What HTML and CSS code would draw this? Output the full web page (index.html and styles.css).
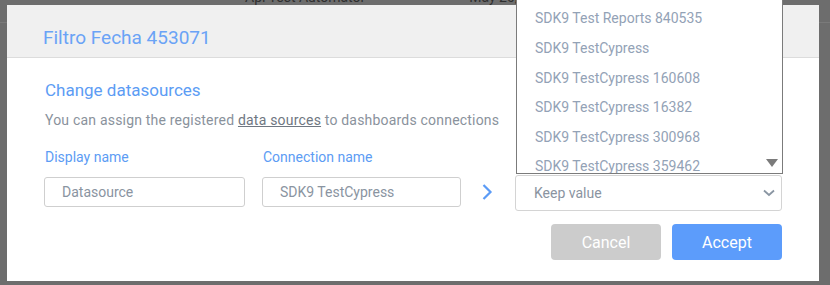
FILE: index.html
```html
<!DOCTYPE html>
<html lang="en">
<head>
  <meta charset="UTF-8">
  <title>Filtro Fecha 453071 - Change datasources</title>
  <link rel="stylesheet" href="styles.css">
</head>
<body>

  <!-- page behind the overlay -->
  <div class="behind">
    <span class="behind-name">Api Test Automator</span>
    <span class="behind-date">May 20,</span>
  </div>

  <div class="modal">
    <div class="modal-header">
      <h2 class="modal-title">Filtro Fecha 453071</h2>
    </div>

    <div class="modal-body">
      <h3 class="section-title">Change datasources</h3>
      <p class="section-text">You can assign the registered <a href="#">data sources</a> to dashboards connections</p>

      <div class="field-row">
        <div class="field field-display">
          <label class="field-label">Display name</label>
          <div class="input">Datasource</div>
        </div>
        <div class="field field-connection">
          <label class="field-label">Connection name</label>
          <div class="input">SDK9 TestCypress</div>
        </div>
        <div class="arrow">
          <svg width="12" height="18" viewBox="0 0 12 18">
            <path d="M2.5 2 L9.5 9 L2.5 16" fill="none" stroke="#5b9bf6" stroke-width="2.2"/>
          </svg>
        </div>
        <div class="field field-select">
          <div class="select">
            <span>Keep value</span>
            <svg width="12" height="8" viewBox="0 0 12 8">
              <path d="M1 1.5 L6 6 L11 1.5" fill="none" stroke="#8a96a3" stroke-width="1.8"/>
            </svg>
          </div>
          <div class="options">
            <div class="options-inner">
              <div class="option">SDK9 Test Reports 840535</div>
              <div class="option">SDK9 TestCypress</div>
              <div class="option">SDK9 TestCypress 160608</div>
              <div class="option">SDK9 TestCypress 16382</div>
              <div class="option">SDK9 TestCypress 300968</div>
              <div class="option">SDK9 TestCypress 359462</div>
            </div>
            <span class="scroll-down"></span>
          </div>
        </div>
      </div>

      <div class="actions">
        <button class="btn btn-cancel">Cancel</button>
        <button class="btn btn-accept">Accept</button>
      </div>
    </div>
  </div>

</body>
</html>
```

FILE: styles.css
```css
body {
  margin: 0;
  width: 830px;
  height: 285px;
  overflow: hidden;
  background: #6d6d6d;
  font-family: Roboto, "Liberation Sans", sans-serif;
  position: relative;
}
.behind {
  display: flex;
  margin-top: -11px;
  height: 33px;
  border-bottom: 1px solid #7a7a7a;
  font-size: 14px;
  color: #2f2f2f;
}
.behind-name {
  margin-left: 245px;
}
.behind-date {
  margin-left: 104px;
}

.modal {
  position: absolute;
  left: 7px;
  top: 5px;
  width: 812px;
  height: 276px;
  background: white;
}
.modal-header {
  height: 53px;
  background: #f0f0f0;
  border-bottom: 1px solid #dcdcdc;
  display: flex;
  align-items: center;
  padding-left: 36px;
  box-sizing: border-box;
}
.modal-title {
  margin: 12px 0 0 0;
  font-size: 19px;
  font-weight: normal;
  color: #6aa3f6;
}
.modal-body {
  padding: 22px 37px 0 37px;
}
.section-title {
  margin: 0 0 0 1px;
  font-size: 17px;
  font-weight: normal;
  color: #5c9cf4;
}
.section-text {
  margin: 12px 0 0 1px;
  font-size: 14px;
  letter-spacing: 0.2px;
  color: #8a929c;
}
.section-text a {
  color: #6f7782;
  text-decoration: underline;
}

.field-row {
  display: flex;
  align-items: flex-end;
  margin-top: 21px;
}
.field-label {
  display: block;
  margin: 0 0 12px 1px;
  font-size: 14px;
  color: #5c9cf4;
}
.input {
  height: 30px;
  box-sizing: border-box;
  border: 1px solid #cfcfcf;
  border-radius: 3px;
  padding: 0 17px;
  display: flex;
  align-items: center;
  font-size: 14px;
  color: #8a94a1;
}
.field-display {
  width: 201px;
}
.field-connection {
  width: 199px;
  margin-left: 17px;
}
.arrow {
  width: 54px;
  height: 30px;
  display: flex;
  align-items: center;
  padding-left: 20px;
  box-sizing: border-box;
}
.field-select {
  width: 267px;
  position: relative;
  margin-bottom: -4px;
}
.select {
  height: 36px;
  box-sizing: border-box;
  border: 1px solid #d4d4d4;
  border-radius: 3px;
  padding: 0 6px 0 18px;
  display: flex;
  align-items: center;
  justify-content: space-between;
  font-size: 14px;
  color: #8a94a1;
}
.options {
  position: absolute;
  left: 1px;
  right: -1px;
  bottom: calc(100% + 1px);
  height: 200px;
  border: 1px solid #7b7b7b;
  background: white;
  overflow: hidden;
  display: flex;
  flex-direction: column;
  justify-content: flex-end;
}
.options-inner {
  margin-bottom: -9px;
}
.option {
  height: 29.6px;
  line-height: 29.6px;
  padding-left: 18px;
  font-size: 14px;
  color: #93a2b6;
}
.scroll-down {
  position: absolute;
  right: 4px;
  bottom: 6px;
  width: 0;
  height: 0;
  border-left: 6px solid transparent;
  border-right: 6px solid transparent;
  border-top: 8px solid #7b7b7b;
}

.actions {
  display: flex;
  justify-content: flex-end;
  gap: 11px;
  margin-top: 17px;
}
.btn {
  width: 110px;
  height: 36px;
  border: none;
  border-radius: 4px;
  font-family: Roboto, "Liberation Sans", sans-serif;
  font-size: 16px;
  color: white;
}
.btn-cancel {
  background: #cccccc;
}
.btn-accept {
  background: #5c9cfb;
}
```
